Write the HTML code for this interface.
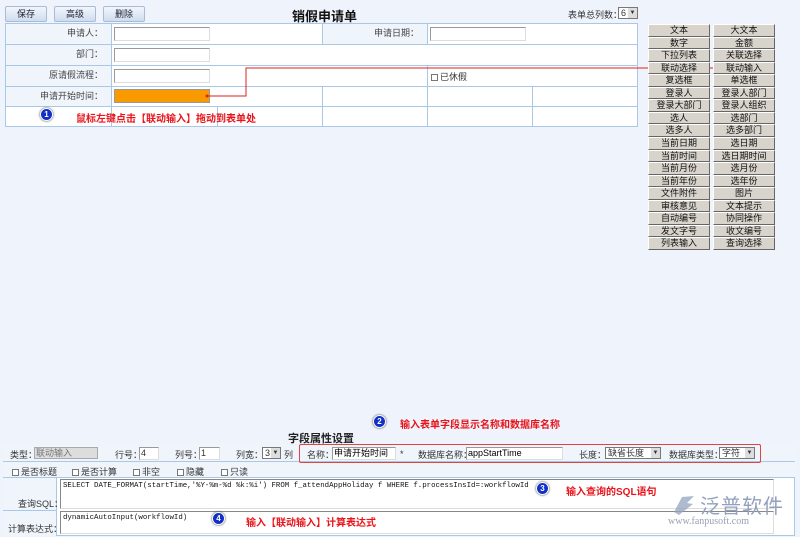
<!DOCTYPE html>
<html><head><meta charset="utf-8"><style>
*{margin:0;padding:0;box-sizing:border-box}
body{width:800px;height:537px;background:#eef3fc;font-family:"Liberation Sans","Noto Sans CJK SC",sans-serif;font-size:9px;color:#333;position:relative;overflow:hidden}
.a{position:absolute}
.btn{position:absolute;top:6px;height:16px;background:linear-gradient(#f2f6fc,#cfdcee);border:1px solid #a8bcd8;border-radius:2px;font-size:9px;text-align:center;line-height:14px;color:#223}
.cell{position:absolute;border:1px solid #a9c8e8}
.lbl{text-align:right;padding-right:8px;line-height:19px;background:#f0f5fc;color:#444}
.inp{position:absolute;background:#fff;border:1px solid #999;border-right-color:#ddd;border-bottom-color:#ddd}
.pb{position:absolute;width:62px;height:12px;background:#d8d4cc;border:1px solid #fff;border-right-color:#666;border-bottom-color:#666;font-size:9px;line-height:10px;text-align:center;color:#111}
.red{color:#e8131a;font-weight:bold;font-size:10px}
.num{position:absolute;width:13px;height:13px;border-radius:50%;background:#1230c8;border:1px solid #fff;box-shadow:0 0 2px #333;color:#fff;font-size:8px;font-weight:bold;text-align:center;line-height:11px}
.cb{display:inline-block;width:7px;height:7px;border:1px solid #777;background:#fff;margin-right:2px;vertical-align:-1px}
.sel{position:absolute;background:#fff;border:1px solid #777;height:12px;font-size:9px;line-height:10px;padding-left:2px;overflow:hidden}
.sel:after{content:"▼";position:absolute;right:0;top:0;width:9px;height:10px;background:#ddd;font-size:6px;line-height:10px;text-align:center}
.mono{font-family:'Liberation Mono',monospace;font-size:7.4px}
</style></head><body>
<div class="btn" style="left:5px;width:42px">保存</div>
<div class="btn" style="left:54px;width:42px">高级</div>
<div class="btn" style="left:103px;width:42px">删除</div>
<div class="a" style="left:292px;top:6px;font-size:13px;font-weight:bold;color:#111">销假申请单</div>
<div class="a" style="left:568px;top:8px;font-size:9px">表单总列数：</div>
<div class="sel" style="left:618px;top:7px;width:20px">6</div>

<div class="a" style="left:5px;top:23px;width:633px;height:104px;background:#fff;border:1px solid #a9c8e8"></div>
<div class="cell lbl" style="left:5px;top:23px;width:107px;height:22px">申请人：</div>
<div class="cell" style="left:111px;top:23px;width:212px;height:22px"></div>
<div class="cell lbl" style="left:322px;top:23px;width:106px;height:22px">申请日期：</div>
<div class="cell" style="left:427px;top:23px;width:211px;height:22px"></div>
<div class="cell lbl" style="left:5px;top:44px;width:107px;height:22px">部门：</div>
<div class="cell" style="left:111px;top:44px;width:527px;height:22px"></div>
<div class="cell lbl" style="left:5px;top:65px;width:107px;height:22px">原请假流程：</div>
<div class="cell" style="left:111px;top:65px;width:317px;height:22px"></div>
<div class="cell" style="left:427px;top:65px;width:211px;height:22px;padding:4px 3px;font-size:9px"><span class="cb"></span>已休假</div>
<div class="cell lbl" style="left:5px;top:86px;width:107px;height:21px">申请开始时间：</div>
<div class="cell" style="left:111px;top:86px;width:212px;height:21px"></div>
<div class="cell" style="left:322px;top:86px;width:106px;height:21px"></div>
<div class="cell" style="left:427px;top:86px;width:106px;height:21px"></div>
<div class="cell" style="left:532px;top:86px;width:106px;height:21px"></div>
<div class="cell" style="left:5px;top:106px;width:107px;height:21px"></div>
<div class="cell" style="left:111px;top:106px;width:107px;height:21px"></div>
<div class="cell" style="left:217px;top:106px;width:106px;height:21px"></div>
<div class="cell" style="left:322px;top:106px;width:106px;height:21px"></div>
<div class="cell" style="left:427px;top:106px;width:106px;height:21px"></div>
<div class="cell" style="left:532px;top:106px;width:106px;height:21px"></div>
<div class="inp" style="left:114px;top:27px;width:96px;height:14px"></div>
<div class="inp" style="left:430px;top:27px;width:96px;height:14px"></div>
<div class="inp" style="left:114px;top:48px;width:96px;height:14px"></div>
<div class="inp" style="left:114px;top:69px;width:96px;height:14px"></div>
<div class="a" style="left:114px;top:89px;width:96px;height:14px;background:#f99a00;border:1px solid #999"></div>
<svg class="a" style="left:0;top:0" width="800" height="130"><polyline points="206,96 246,96 246,68 725,68" fill="none" stroke="#d22" stroke-width="1"/><circle cx="207" cy="96" r="1.5" fill="#d22"/><circle cx="725" cy="68" r="1.5" fill="#d22"/></svg>
<div class="num" style="left:40px;top:108px">1</div>
<div class="a red" style="left:76px;top:110px">鼠标左键点击【联动输入】拖动到表单处</div>

<div id="pal"></div>
<script>
var L=["文本","数字","下拉列表","联动选择","复选框","登录人","登录大部门","选人","选多人","当前日期","当前时间","当前月份","当前年份","文件附件","审核意见","自动编号","发文字号","列表输入"];
var R=["大文本","金额","关联选择","联动输入","单选框","登录人部门","登录人组织","选部门","选多部门","选日期","选日期时间","选月份","选年份","图片","文本提示","协同操作","收文编号","查询选择"];
var h="";for(var i=0;i<18;i++){var t=Math.round(24+i*12.55);var n=Math.round(24+(i+1)*12.55);var hh=n-t;h+='<div class="pb" style="left:648px;top:'+t+'px;height:'+hh+'px;line-height:'+(hh-2)+'px">'+L[i]+'</div><div class="pb" style="left:713px;top:'+t+'px;height:'+hh+'px;line-height:'+(hh-2)+'px">'+R[i]+'</div>';}
document.getElementById("pal").innerHTML=h;
</script>

<div class="num" style="left:373px;top:415px">2</div>
<div class="a red" style="left:400px;top:416px">输入表单字段显示名称和数据库名称</div>
<div class="a" style="left:288px;top:430px;font-size:11px;font-weight:bold;color:#222">字段属性设置</div>
<div class="a" style="left:3px;top:445px;width:792px;height:91px;background:#fff;border:1px solid #a9c8e8"></div>
<div class="a" style="left:3px;top:445px;width:792px;height:17px;background:#f0f5fc;border-bottom:1px solid #a9c8e8"></div>
<div class="a" style="left:3px;top:462px;width:792px;height:16px;background:#f0f5fc;border-bottom:1px solid #a9c8e8"></div>
<div class="a" style="left:3px;top:478px;width:54px;height:33px;background:#f0f5fc;border-right:1px solid #a9c8e8;border-bottom:1px solid #a9c8e8"></div>
<div class="a" style="left:3px;top:511px;width:54px;height:25px;background:#f0f5fc;border-right:1px solid #a9c8e8"></div>
<div class="a" style="left:10px;top:448px">类型：</div>
<div class="a" style="left:34px;top:447px;width:64px;height:12px;background:#ddd;border:1px solid #aaa;color:#777;line-height:10px;padding-left:1px">联动输入</div>
<div class="a" style="left:115px;top:448px">行号：</div><div class="inp" style="left:139px;top:447px;width:20px;height:13px;line-height:11px;padding-left:1px">4</div>
<div class="a" style="left:175px;top:448px">列号：</div><div class="inp" style="left:199px;top:447px;width:21px;height:13px;line-height:11px;padding-left:1px">1</div>
<div class="a" style="left:236px;top:448px">列宽：</div><div class="sel" style="left:262px;top:447px;width:19px">3</div><div class="a" style="left:284px;top:448px">列</div>
<div class="a" style="left:299px;top:444px;width:462px;height:19px;border:1px solid #d44;border-radius:2px"></div>
<div class="a" style="left:307px;top:448px">名称：</div><div class="inp" style="left:332px;top:447px;width:64px;height:13px;line-height:11px;padding-left:1px;color:#000">申请开始时间</div><div class="a" style="left:400px;top:449px">*</div>
<div class="a" style="left:418px;top:448px">数据库名称：</div><div class="inp" style="left:466px;top:447px;width:97px;height:13px;line-height:11px;padding-left:1px;color:#000">appStartTime</div>
<div class="a" style="left:579px;top:448px">长度：</div><div class="sel" style="left:605px;top:447px;width:56px">缺省长度</div>
<div class="a" style="left:669px;top:448px">数据库类型：</div><div class="sel" style="left:719px;top:447px;width:36px;padding-right:10px">字符串</div>
<div class="a" style="left:12px;top:465px"><span class="cb"></span>是否标题</div>
<div class="a" style="left:72px;top:465px"><span class="cb"></span>是否计算</div>
<div class="a" style="left:133px;top:465px"><span class="cb"></span>非空</div>
<div class="a" style="left:177px;top:465px"><span class="cb"></span>隐藏</div>
<div class="a" style="left:221px;top:465px"><span class="cb"></span>只读</div>
<div class="a" style="left:18px;top:497px">查询SQL：</div>
<div class="a" style="left:8px;top:522px">计算表达式：</div>
<div class="a mono" style="left:60px;top:479px;width:714px;height:30px;border:1px solid #888;border-right-color:#ddd;border-bottom-color:#ddd;padding:2px 2px;color:#111">SELECT DATE_FORMAT(startTime,'%Y-%m-%d %k:%i') FROM f_attendAppHoliday f WHERE f.processInsId=:workflowId</div>
<div class="a mono" style="left:60px;top:511px;width:714px;height:23px;border:1px solid #888;border-right-color:#ddd;border-bottom-color:#ddd;padding:2px 2px;color:#111">dynamicAutoInput(workflowId)</div>
<div class="num" style="left:536px;top:482px">3</div>
<div class="a red" style="left:566px;top:483px">输入查询的SQL语句</div>
<div class="num" style="left:212px;top:512px">4</div>
<div class="a red" style="left:246px;top:514px">输入【联动输入】计算表达式</div>
<svg class="a" style="left:670px;top:491px" width="28" height="26"><path d="M4 21 L12 6 L24 5 L17 12 L23 13 L9 24 Z" fill="#93a3bf" opacity="0.75"/></svg>
<div class="a" style="left:700px;top:490px;font-size:20px;color:#93a0bc;letter-spacing:1px">泛普软件</div>
<div class="a" style="left:668px;top:516px;font-size:10px;color:#9aa0b4;font-family:'Liberation Serif',serif">www.fanpusoft.com</div>
</body></html>
